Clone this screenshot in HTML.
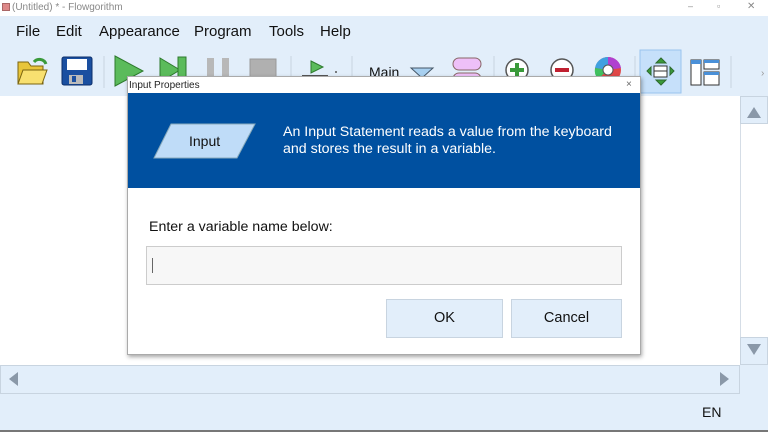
<!DOCTYPE html>
<html><head><style>
*{margin:0;padding:0;box-sizing:border-box}
body{width:768px;height:432px;overflow:hidden;background:#fff;font-family:"Liberation Sans",sans-serif;position:relative}
.abs{position:absolute}
</style></head><body>
<div class="abs" style="left:0;top:0;width:768px;height:16px;background:#fff;font-size:10px;color:#888;">
<div class="abs" style="left:2px;top:3px;width:8px;height:8px;background:#d88;border:1px solid #a66"></div>
<span class="abs" style="left:12px;top:2px">(Untitled) * - Flowgorithm</span>
<span class="abs" style="left:688px;top:1px;font-size:9px">–</span>
<span class="abs" style="left:717px;top:1px;font-size:9px">▫</span>
<span class="abs" style="left:747px;top:1px;font-size:10px">✕</span>
</div>
<div class="abs" style="left:0;top:16px;width:768px;height:80px;background:#e2eefa"></div>
<div class="abs" style="left:16px;top:23px;font-size:15px;color:#111;word-spacing:0">
<span class="abs" style="left:0">File</span><span class="abs" style="left:40px">Edit</span><span class="abs" style="left:83px">Appearance</span><span class="abs" style="left:178px">Program</span><span class="abs" style="left:253px">Tools</span><span class="abs" style="left:304px">Help</span></div>
<svg class="abs" style="left:0;top:48px" width="768" height="48">
<path d="M18 14h10l3 4h12v18H18z" fill="#e8c53a" stroke="#7a6410"/><path d="M18 36l5-14h24l-5 14z" fill="#f8e070" stroke="#7a6410"/>
<path d="M34 14a7 7 0 0 1 12 2" stroke="#3a9a3a" stroke-width="3" fill="none"/>
<rect x="62" y="9" width="30" height="28" rx="2" fill="#1a4fa0" stroke="#0c2f6a"/><rect x="67" y="11" width="20" height="11" fill="#fff"/><rect x="69" y="27" width="14" height="9" fill="#bbb"/><rect x="72" y="28" width="4" height="6" fill="#1a4fa0"/>
<line x1="104" y1="8" x2="104" y2="40" stroke="#c8d4e0"/>
<path d="M115 8l28 15-28 15z" fill="#5bbb5b" stroke="#2d7a2d"/>
<path d="M160 10l20 12-20 12z" fill="#5bbb5b" stroke="#2d7a2d"/><rect x="178" y="9" width="8" height="27" fill="#5bbb5b" stroke="#2d7a2d"/>
<rect x="207" y="10" width="7" height="25" fill="#b8b8b8"/><rect x="222" y="10" width="7" height="25" fill="#b8b8b8"/>
<rect x="250" y="11" width="26" height="24" fill="#b0b0b0" stroke="#999"/>
<line x1="291" y1="8" x2="291" y2="40" stroke="#c8d4e0"/>
<path d="M311 13l12 6-12 6z" fill="#5bbb5b" stroke="#2d7a2d"/><line x1="302" y1="28" x2="328" y2="28" stroke="#555" stroke-width="2"/><circle cx="336" cy="24" r="1" fill="#555"/>
<line x1="352" y1="8" x2="352" y2="40" stroke="#c8d4e0"/>
<text x="369" y="29" font-size="14" font-family="Liberation Sans" fill="#111">Main</text>
<path d="M411 20h22l-11 10z" fill="#a8d0f0" stroke="#456"/>
<rect x="453" y="10" width="28" height="12" rx="6" fill="#eec0f8" stroke="#866"/><rect x="453" y="25" width="28" height="12" rx="6" fill="#eec0f8" stroke="#866"/>
<line x1="494" y1="8" x2="494" y2="40" stroke="#c8d4e0"/>
<circle cx="517" cy="22" r="11" fill="#fff" stroke="#555" stroke-width="1.5"/><path d="M517 15v14M510 22h14" stroke="#3a9a3a" stroke-width="4"/>
<circle cx="562" cy="22" r="11" fill="#fff" stroke="#555" stroke-width="1.5"/><path d="M555 22h14" stroke="#c02030" stroke-width="4"/>
<circle cx="608" cy="22" r="13" fill="#e04848"/><path d="M608 22L608 9A13 13 0 0 1 621 20z" fill="#b040d0"/><path d="M608 22L595 20A13 13 0 0 1 608 9z" fill="#40a0e0"/><path d="M608 22L598 31A13 13 0 0 1 595 20z" fill="#40c060"/><circle cx="608" cy="22" r="5" fill="#fff" stroke="#555"/>
<line x1="635" y1="8" x2="635" y2="40" stroke="#c8d4e0"/>
<rect x="640" y="2" width="41" height="43" fill="#c6e0fa" stroke="#9ac4ee"/>
<rect x="654" y="18" width="13" height="11" fill="#fff" stroke="#333"/><line x1="654" y1="23" x2="667" y2="23" stroke="#333"/>
<path d="M656 15l5-5 5 5zM656 32l5 5 5-5zM651 19l-4 4 4 4zM670 19l4 4-4 4z" fill="#3a9a3a" stroke="#2d6a2d"/>
<rect x="691" y="12" width="10" height="25" fill="#fff" stroke="#333"/><rect x="691" y="12" width="10" height="4" fill="#4a90d8"/>
<rect x="704" y="12" width="15" height="9" fill="#fff" stroke="#333"/><rect x="704" y="12" width="15" height="3" fill="#4a90d8"/>
<rect x="704" y="24" width="15" height="13" fill="#fff" stroke="#333"/><rect x="704" y="24" width="15" height="3" fill="#4a90d8"/>
<line x1="731" y1="8" x2="731" y2="40" stroke="#c8d4e0"/>
<text x="761" y="28" font-size="10" fill="#999">›</text>
</svg>
<div class="abs" style="left:740px;top:96px;width:28px;height:269px;background:#fff;border-left:1px solid #d5dde6"></div>
<div class="abs" style="left:740px;top:96px;width:28px;height:28px;background:#e2eefa;border:1px solid #c8d4e0"></div>
<div class="abs" style="left:747px;top:107px;width:0;height:0;border-left:7px solid transparent;border-right:7px solid transparent;border-bottom:11px solid #8a98a8"></div>
<div class="abs" style="left:740px;top:337px;width:28px;height:28px;background:#e2eefa;border:1px solid #c8d4e0"></div>
<div class="abs" style="left:747px;top:344px;width:0;height:0;border-left:7px solid transparent;border-right:7px solid transparent;border-top:11px solid #8a98a8"></div>
<div class="abs" style="left:0;top:365px;width:768px;height:67px;background:#e2eefa"></div>
<div class="abs" style="left:0;top:365px;width:740px;height:29px;border:1px solid #c8d4e0"></div>
<div class="abs" style="left:9px;top:372px;width:0;height:0;border-top:7px solid transparent;border-bottom:7px solid transparent;border-right:9px solid #8a98a8"></div>
<div class="abs" style="left:720px;top:372px;width:0;height:0;border-top:7px solid transparent;border-bottom:7px solid transparent;border-left:9px solid #8a98a8"></div>
<span class="abs" style="left:702px;top:404px;font-size:14px;color:#111">EN</span>
<div class="abs" style="left:0;top:430px;width:768px;height:2px;background:#777"></div>
<div class="abs" style="left:127px;top:76px;width:514px;height:279px;background:#fff;border:1px solid #aaa;box-shadow:1px 2px 4px rgba(0,0,0,.35)">
<span class="abs" style="left:1px;top:3px;font-size:10px;color:#222">Input Properties</span>
<span class="abs" style="left:498px;top:2px;font-size:10px;color:#666">×</span>
<div class="abs" style="left:0;top:16px;width:512px;height:95px;background:#0050a0"></div>
<svg class="abs" style="left:25px;top:46px" width="104" height="36"><path d="M18 1h84l-18 34H1z" fill="#bfdcf8" stroke="#8ab"/><text x="36" y="23" font-size="14" font-family="Liberation Sans" fill="#111">Input</text></svg>
<div class="abs" style="left:155px;top:47px;font-size:14.2px;line-height:17px;color:#fff">An Input Statement reads a value from the keyboard<br>and stores the result in a variable.</div>
<span class="abs" style="left:21px;top:142px;font-size:14.2px;color:#111">Enter a variable name below:</span>
<div class="abs" style="left:18px;top:169px;width:476px;height:39px;background:#f7f7f7;border:1px solid #ccc"></div>
<div class="abs" style="left:24px;top:181px;width:1px;height:15px;background:#666"></div>
<div class="abs" style="left:258px;top:222px;width:117px;height:39px;background:#e2eefa;border:1px solid #c8d4e0;font-size:14.5px;text-align:center;line-height:37px;color:#111">OK</div>
<div class="abs" style="left:383px;top:222px;width:111px;height:39px;background:#e2eefa;border:1px solid #c8d4e0;font-size:14.5px;text-align:center;line-height:37px;color:#111">Cancel</div>
</div>
</body></html>
